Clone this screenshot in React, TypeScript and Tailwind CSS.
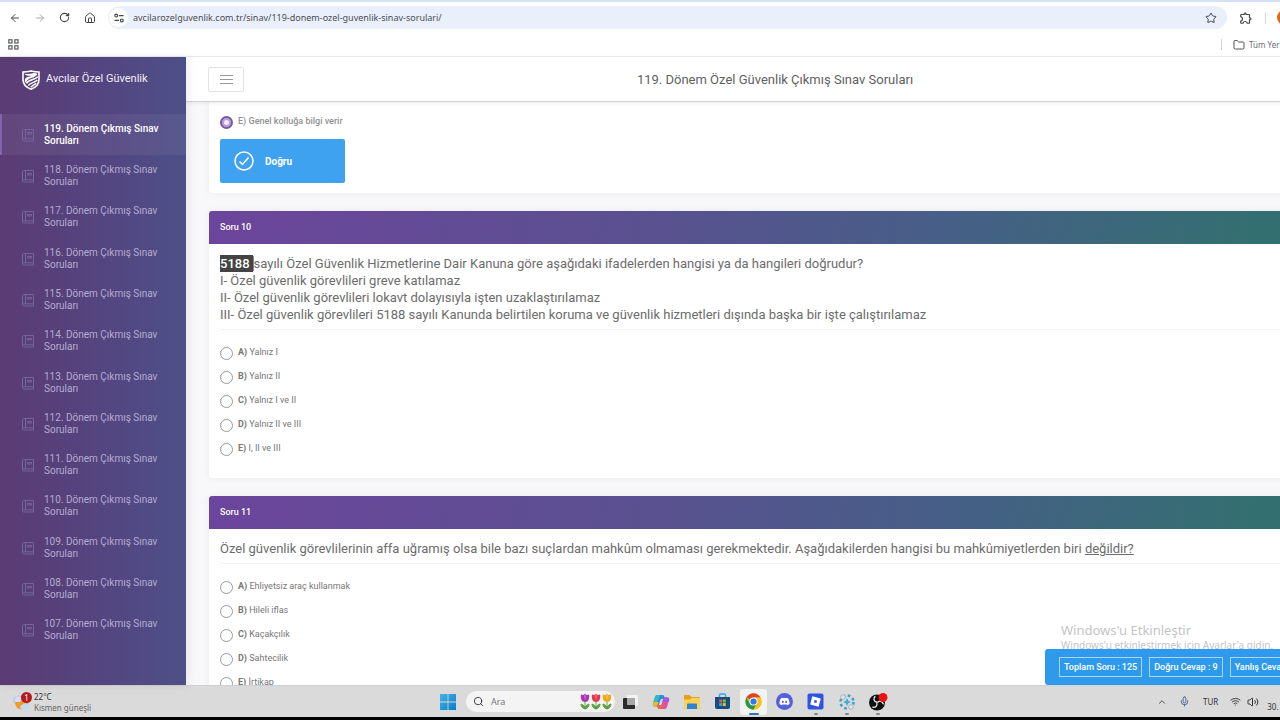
import { useState } from 'react'
import type { ReactNode } from 'react'
import { ArrowLeft, ArrowRight, ChevronUp, Folder, House, Mic, RotateCw, Search, Star, Volume2, Wifi } from 'lucide-react'
import { FaDiscord } from 'react-icons/fa'
import { MdOutlineExtension } from 'react-icons/md'

type Choice = { key: string; text: string }

const TERMS = [119, 118, 117, 116, 115, 114, 113, 112, 111, 110, 109, 108, 107]

const Q9: Choice[] = [{ key: 'E', text: 'Genel kolluğa bilgi verir' }]

const Q10: Choice[] = [
  { key: 'A', text: 'Yalnız I' },
  { key: 'B', text: 'Yalnız II' },
  { key: 'C', text: 'Yalnız I ve II' },
  { key: 'D', text: 'Yalnız II ve III' },
  { key: 'E', text: 'I, II ve III' },
]

const Q11: Choice[] = [
  { key: 'A', text: 'Ehliyetsiz araç kullanmak' },
  { key: 'B', text: 'Hileli iflas' },
  { key: 'C', text: 'Kaçakçılık' },
  { key: 'D', text: 'Sahtecilik' },
  { key: 'E', text: 'İrtikap' },
]

function TuneIcon() {
  return (
    <svg width="10" height="10" viewBox="0 0 10 10" fill="none" stroke="#444746" strokeWidth="1.2">
      <circle cx="2.2" cy="2.6" r="1.4" />
      <path d="M5 2.6h4.5M0.5 7.4H5" />
      <circle cx="7.8" cy="7.4" r="1.4" />
    </svg>
  )
}

function AppsIcon() {
  return (
    <svg width="11" height="11" viewBox="0 0 11 11" fill="none" stroke="#5a5c5e" strokeWidth="1.2">
      <rect x="0.8" y="0.8" width="3.2" height="3.2" />
      <rect x="6.8" y="0.8" width="3.2" height="3.2" />
      <rect x="0.8" y="6.8" width="3.2" height="3.2" />
      <rect x="6.8" y="6.8" width="3.2" height="3.2" />
    </svg>
  )
}

function ShieldLogo() {
  return (
    <svg width="18" height="20" viewBox="0 0 18 20" fill="none">
      <path
        d="M1 2C4 2 6.500 1.600 9 .9c2.500.7 5 1.100 8 1.100v7.500c0 5-3.500 8-8 9.700C4.500 17.500 1 14.500 1 9.500z"
        stroke="#fff"
        strokeWidth="1.600"
      />
      <path
        d="M2 3.500c3 1.200 6 .2 9-.3 2-.3 3.500 0 4.500.8-1 2-3 3-5.500 3.800-2 .6-4.500 1.200-5.500 3.700L3.700 13C2.300 10.500 2.500 8.500 4.500 7.500 6 6.700 8 6.700 9.500 5.500 7 6.100 4 6.200 2 3.500z"
        fill="#fff"
      />
      <path d="M4.500 13.300c2-3.800 7.500-3 11.300-6.500M6.300 15.700c2-3.200 6-2.700 9-5.700M8.800 17.300c1.500-2 3.500-2.200 5.200-4" stroke="#fff" strokeWidth="1.500" />
    </svg>
  )
}

function BookIcon() {
  return (
    <svg width="12" height="14" viewBox="0 0 12 14" fill="none" stroke="currentColor" strokeWidth="1">
      <path d="M11.500 10.800V1.500H2c-.9 0-1.500.4-1.500 1.200v9c0 .9.600 1.300 1.500 1.300h9.500v-2.200H2c-.8 0-1.500.4-1.500 1.100M3.500 1.500v9.300" />
      <path d="M5.500 4.500h4v1.500h-4z" />
    </svg>
  )
}

function NavButton({ label, children }: { label: string; children: ReactNode }) {
  return (
    <button aria-label={label} className="flex h-6 w-[25px] items-center justify-center text-[#444746]">
      {children}
    </button>
  )
}

function BrowserBar() {
  return (
    <header className="shrink-0 border-t-2 border-b border-t-[#d6e1f8] border-b-[#ececee] bg-white font-['Noto_Sans','Open_Sans',sans-serif]">
      <div className="flex h-[31px] items-center pl-[2px]">
        <NavButton label="Geri"><ArrowLeft size={12} /></NavButton>
        <NavButton label="İleri"><ArrowRight size={12} className="text-[#a5a7a9]" /></NavButton>
        <NavButton label="Yenile"><RotateCw size={11} strokeWidth={2.5} /></NavButton>
        <NavButton label="Ana sayfa"><House size={12} /></NavButton>
        <div className="ml-[6px] flex h-[23px] flex-1 items-center rounded-full bg-[#e9f0fb] px-px">
          <span className="flex size-[19px] items-center justify-center rounded-full bg-white"><TuneIcon /></span>
          <input
            aria-label="Adres çubuğu"
            defaultValue="avcilarozelguvenlik.com.tr/sinav/119-donem-ozel-guvenlik-sinav-sorulari/"
            className="ml-[5px] min-w-0 flex-1 bg-transparent text-[9px] text-[#4a4d52] outline-none"
          />
          <button aria-label="Yer işareti ekle" className="mr-[9px] text-[#444746]"><Star size={12} /></button>
        </div>
        <div className="flex w-[137px] shrink-0 items-center pl-3">
          <button aria-label="Uzantılar" className="text-[#444746]"><MdOutlineExtension size={14} /></button>
          <span className="ml-3 h-3 w-px bg-[#d3d6da]" />
          <span className="ml-[11px] size-[15px] rounded-full bg-[#e0661c]" />
        </div>
      </div>
      <div className="flex h-[23px] items-center pl-2">
        <button aria-label="Uygulamalar"><AppsIcon /></button>
        <div className="ml-auto flex w-[143px] items-center">
          <span className="h-[11px] w-px bg-[#cfd2d6]" />
          <button className="ml-[11px] flex items-center gap-1 text-[8px] text-[#6a6d70]">
            <Folder size={12} className="text-[#555]" />
            Tüm Yer
          </button>
        </div>
      </div>
    </header>
  )
}

function Sidebar() {
  return (
    <aside className="z-20 flex w-[186px] shrink-0 flex-col bg-linear-to-r from-[#5b3b73] via-[#54447f] to-[#4e4f88] shadow-[2px_0_10px_rgba(0,0,0,0.08)]">
      <a href="#" className="flex h-[45px] items-center gap-[6px] pl-[22px] text-[11px] text-[#f1edf7]">
        <ShieldLogo />
        Avcılar Özel Güvenlik
      </a>
      <nav className="mt-3 mb-[34px] flex flex-1 flex-col">
        {TERMS.map((term, i) => (
          <a
            key={term}
            href={`#donem-${term}`}
            className={
              i === 0
                ? 'flex flex-1 items-center border-l-2 border-[#8262b5] bg-white/6 pl-[20px] text-[10px] leading-3 font-medium text-white'
                : 'flex flex-1 items-center border-l-2 border-transparent pl-[20px] text-[10px] leading-3 text-[#b5abd0]'
            }
          >
            <span className="mr-[10px] text-[#75659c]"><BookIcon /></span>
            <span>
              {term}. Dönem Çıkmış Sınav
              <br />
              Soruları
            </span>
          </a>
        ))}
      </nav>
    </aside>
  )
}

function Options({ name, choices, answer }: { name: string; choices: Choice[]; answer?: string }) {
  const [picked, setPicked] = useState(answer)

  return (
    <div>
      {choices.map(c => (
        <label key={c.key} className={`flex h-6 items-center gap-[5px] text-[9px] ${answer ? 'text-[#919191]' : 'text-[#777]'}`}>
          <input
            type="radio"
            name={name}
            checked={picked === c.key}
            onChange={() => setPicked(c.key)}
            className="size-[13px] appearance-none rounded-full border border-[#999] bg-white checked:border-2 checked:border-[#75589f] checked:bg-[#f1e9fb] checked:shadow-[inset_0_0_0_2px_#b79bdc]"
          />
          <span className={answer ? 'font-medium' : ''}>
            <b className={answer ? 'font-medium' : 'font-bold'}>{c.key})</b> {c.text}
          </span>
        </label>
      ))}
    </div>
  )
}

function QuestionCard({ no, choices, children }: { no: number; choices: Choice[]; children: ReactNode }) {
  return (
    <section className="rounded-[3px] bg-white shadow-[0_0_8px_rgba(0,0,0,0.06)]">
      <h2 className="flex h-[33px] items-center rounded-t-[3px] bg-[linear-gradient(100deg,#6c459c_0%,#5a5090_38%,#465f87_65%,#336f70_92%)] px-[11px] text-[9px] font-medium text-white">
        Soru {no}
      </h2>
      <div className="px-[11px] pt-[11px] pb-[17px]">
        <div className="border-b border-[#f2f2f2] pb-[6px] text-[13px] leading-[17px] text-[#6c6c6c]">{children}</div>
        <div className="pt-[11px]">
          <Options name={`soru-${no}`} choices={choices} />
        </div>
      </div>
    </section>
  )
}

function ScoreBar() {
  return (
    <div className="absolute right-0 bottom-0 flex h-9 w-[319px] items-center gap-[7px] rounded-l-[3px] bg-[#2e9aec] pl-[14px] text-[9px] font-medium whitespace-nowrap text-white">
      <span className="border border-[#a9d6fa] px-1 py-px leading-4">Toplam Soru : 125</span>
      <span className="border border-[#a9d6fa] px-1 py-px leading-4">Doğru Cevap : 9</span>
      <span className="border border-[#a9d6fa] px-1 py-px leading-4">Yanlış Cevap</span>
    </div>
  )
}

function WeatherIcon() {
  return (
    <svg width="20" height="20" viewBox="0 0 20 20">
      <path d="M3 12a3.500 3.500 0 0 1 0-7 5 5 0 0 1 8 0v6z" fill="#b9cdec" />
      <circle cx="8.500" cy="11" r="6.500" fill="#f09a2a" />
      <path d="M2 8a4 4 0 0 1 7-2l-2 4H2z" fill="#d3e0f5" />
      <path d="M9 17.500a2.300 2.300 0 0 1 0-4.500 3.500 3.500 0 0 1 6 0 2.300 2.300 0 0 1 0 4.500z" fill="#c5d9f7" />
      <circle cx="13.500" cy="5.500" r="5.500" fill="#b3191f" />
      <text x="13.500" y="8.500" fontSize="8" textAnchor="middle" fill="#fff" fontFamily="Noto Sans, sans-serif">1</text>
    </svg>
  )
}

function WindowsIcon() {
  return (
    <svg width="16" height="16" viewBox="0 0 16 16">
      <defs>
        <linearGradient id="win" x1="0" y1="0" x2="1" y2="1">
          <stop offset="0" stopColor="#45b5e8" />
          <stop offset="1" stopColor="#0b7bc9" />
        </linearGradient>
      </defs>
      <path d="M0 0h7.600v7.600H0zM8.400 0H16v7.600H8.400zM0 8.400h7.600V16H0zM8.400 8.400H16V16H8.400z" fill="url(#win)" />
    </svg>
  )
}

function Tulips() {
  const flowers = [
    { x: 0, color: '#b035b5' },
    { x: 11, color: '#e23a50' },
    { x: 22, color: '#efa91f' },
  ]
  return (
    <svg width="32" height="17" viewBox="0 0 32 17">
      {flowers.map(f => (
        <g key={f.x} transform={`translate(${f.x} 0)`}>
          <path d="M5 7v9M5 16C2 15.500 1 13 1 11c2.500.5 4 2.500 4 5zm0 0c3-.5 4-3 4-5-2.500.5-4 2.500-4 5z" fill="#62a83e" stroke="#4e9436" strokeWidth="0.800" />
          <path d="M1 1.500l2.500.5L5 .5 6.500 2 9 1.500c.7 4-.5 7.500-4 7.500S.3 5.500 1 1.500z" fill={f.color} />
          <path d="M5 .5c1.300 2 1.300 4 0 6-1.300-2-1.300-4 0-6z" fill="#fff" opacity="0.250" />
        </g>
      ))}
    </svg>
  )
}

function TaskViewIcon() {
  return (
    <svg width="16" height="16" viewBox="0 0 16 16">
      <rect x="5" y="1" width="11" height="11" rx="1" fill="#f3f3f3" />
      <rect x="1" y="4" width="12" height="11" rx="1" fill="#2b2b2b" />
      <path d="M5 4h8v7H5z" fill="#a8a8a8" />
    </svg>
  )
}

function CopilotIcon() {
  return (
    <svg width="18" height="16" viewBox="0 0 18 16">
      <path d="M5.500 1h5c1.300 0 1.700.8 2 2l.6 2H10c-1 0-1.500.5-1.800 1.500L6.800 11c-.3 1-.9 1.500-1.800 1.500H2.500C.9 12.500.5 11 1 9.500l2-6.500c.4-1.300 1.100-2 2.500-2z" fill="#2a8fe0" />
      <path d="M2 6l1-3c.4-1.300 1.100-2 2.500-2H8L5 9H1.200z" fill="#35b9c5" />
      <path d="M1 9.500L1.500 8H6.500L5.800 10.500c-.3 1.200-.9 2-1.800 2H2.500C1 12.500.6 11 1 9.500z" fill="#f2b827" />
      <path d="M12.500 15h-5c-1.300 0-1.700-.8-2-2l-.6-2H8c1 0 1.500-.5 1.800-1.500L11.200 5c.3-1 .9-1.500 1.800-1.500h2.500c1.600 0 2 1.500 1.500 3l-2 6.500c-.4 1.300-1.100 2-2.500 2z" fill="#e0559a" />
      <path d="M11.200 5c.3-1 .9-1.500 1.800-1.500h2.500c1.600 0 2 1.500 1.500 3L16.500 8h-6.200z" fill="#a259e0" />
      <path d="M7.500 15c-1.300 0-1.700-.8-2-2l-.6-2H8l3 1-1 3z" fill="#f06a3e" />
    </svg>
  )
}

function ExplorerIcon() {
  return (
    <svg width="18" height="16" viewBox="0 0 18 16">
      <path d="M1 2c0-.6.400-1 1-1h4.500L8.500 3H16c.6 0 1 .4 1 1v10c0 .6-.4 1-1 1H2c-.6 0-1-.4-1-1z" fill="#e0a21c" />
      <path d="M1 5.500h6l1.500-1.500H17v10c0 .6-.4 1-1 1H2c-.6 0-1-.4-1-1z" fill="#fad255" />
      <path d="M4 10.500c0-.6.400-1 1-1h8c.6 0 1 .4 1 1V15H4z" fill="#2d86d4" />
    </svg>
  )
}

function StoreIcon() {
  return (
    <svg width="17" height="17" viewBox="0 0 17 17">
      <path d="M5.500 4.500V2c0-.6.400-1 1-1h4c.6 0 1 .4 1 1v2.500" fill="none" stroke="#39a5e4" strokeWidth="1.400" />
      <path d="M1 4h15v10c0 1.200-.8 2-2 2H3c-1.200 0-2-.8-2-2z" fill="#174d80" />
      <path d="M5.200 6.500h3v3h-3z" fill="#ef5b34" />
      <path d="M8.800 6.500h3v3h-3z" fill="#7dba2f" />
      <path d="M5.200 10.100h3v3h-3z" fill="#31a5ea" />
      <path d="M8.800 10.100h3v3h-3z" fill="#fbb91f" />
    </svg>
  )
}

function ChromeIcon() {
  return (
    <svg width="17" height="17" viewBox="0 0 48 48">
      <circle cx="24" cy="24" r="23" fill="#fbc116" />
      <path d="M24 24L4.100 12.500A23 23 0 0 1 43.900 12.500H24z" fill="#e0412f" />
      <path d="M4.100 12.500A23 23 0 0 0 24 47l10-17.300L24 24 14 29.700z" fill="#27994a" />
      <path d="M43.900 12.500H24v11.500l10 5.700L24 47A23 23 0 0 0 43.900 12.500z" fill="#fbc116" />
      <circle cx="24" cy="24" r="11.500" fill="#fff" />
      <circle cx="24" cy="24" r="8.800" fill="#2f79e8" />
    </svg>
  )
}

function RobloxIcon() {
  return (
    <svg width="17" height="17" viewBox="0 0 17 17">
      <rect x="0.500" y="0.500" width="16" height="16" rx="2" fill="#3153e3" />
      <path d="M5.300 3.200l8.500 2.200-2.200 8.400-8.400-2.200zM7.500 7l-.6 2.400 2.500.7.600-2.500z" fill="#fff" fillRule="evenodd" />
    </svg>
  )
}

function GearIcon() {
  return (
    <svg width="18" height="18" viewBox="0 0 18 18" fill="none">
      <circle cx="9" cy="9" r="6.500" stroke="#3a9fc9" strokeWidth="2.500" strokeDasharray="2.600 2.500" />
      <path d="M9 5l1.300 2.700L13 9l-2.700 1.300L9 13l-1.300-2.700L5 9l2.700-1.300z" fill="#45aad4" />
      <circle cx="5" cy="4" r="2.300" fill="#dfe8ec" stroke="#8ea5b0" strokeWidth="0.700" />
      <circle cx="13" cy="14" r="2.300" fill="#dfe8ec" stroke="#8ea5b0" strokeWidth="0.700" />
    </svg>
  )
}

function ObsIcon() {
  return (
    <svg width="20" height="18" viewBox="0 0 20 18">
      <circle cx="9" cy="9.500" r="8" fill="#101010" />
      <g fill="none" stroke="#e8e8e8" strokeWidth="1.300" strokeLinecap="round">
        <path d="M7 3.500c-1.800 2-1.300 4.800 1.500 5.500" />
        <path d="M7 3.500c-1.800 2-1.300 4.800 1.500 5.500" transform="rotate(120 9 9.500)" />
        <path d="M7 3.500c-1.800 2-1.300 4.800 1.500 5.500" transform="rotate(240 9 9.500)" />
      </g>
      <circle cx="15" cy="4.500" r="4.500" fill="#ec1313" />
    </svg>
  )
}

const APPS: { name: string; icon: ReactNode; state?: 'active' | 'open' }[] = [
  { name: 'Görev görünümü', icon: <TaskViewIcon /> },
  { name: 'Copilot', icon: <CopilotIcon /> },
  { name: 'Dosya Gezgini', icon: <ExplorerIcon /> },
  { name: 'Microsoft Store', icon: <StoreIcon /> },
  { name: 'Chrome', icon: <ChromeIcon />, state: 'active' },
  {
    name: 'Discord',
    icon: <span className="flex size-[17px] items-center justify-center rounded-full bg-[#5560dc]"><FaDiscord size={11} color="#fff" /></span>,
  },
  { name: 'Roblox', icon: <RobloxIcon />, state: 'open' },
  { name: 'Araçlar', icon: <GearIcon />, state: 'open' },
  { name: 'OBS Studio', icon: <ObsIcon />, state: 'open' },
]

function Taskbar() {
  return (
    <footer className="flex h-8 shrink-0 items-center border-t border-[#cfcfcf] bg-[#dadada] font-['Noto_Sans','Open_Sans',sans-serif]">
      <button className="flex w-[435px] shrink-0 items-center gap-px pl-[13px] text-left text-[8px] leading-[11px] text-[#666]">
        <WeatherIcon />
        <span>
          <span className="block text-[#333]">22°C</span>
          Kısmen güneşli
        </span>
      </button>
      <button aria-label="Başlat" className="flex w-[26px] justify-center"><WindowsIcon /></button>
      <label className="ml-[5px] flex h-[21px] w-[149px] items-center rounded-full bg-[#f4f4f4] pr-[3px] pl-[7px]">
        <Search size={11} className="text-[#333]" />
        <input placeholder="Ara" aria-label="Ara" className="ml-[7px] min-w-0 flex-1 bg-transparent text-[9px] outline-none placeholder:text-[#777]" />
        <Tulips />
      </label>
      <div className="-ml-px flex">
        {APPS.map(app => (
          <button key={app.name} aria-label={app.name} className="w-[31px] px-[2px]">
            <span
              className={
                app.state === 'active'
                  ? 'relative flex h-[26px] items-center justify-center rounded-[3px] bg-[#f2f2f2]'
                  : 'relative flex h-[26px] items-center justify-center'
              }
            >
              {app.icon}
              {app.state === 'active' && <span className="absolute bottom-0 h-[2px] w-[10px] rounded-full bg-[#2f74b5]" />}
              {app.state === 'open' && <span className="absolute bottom-0 h-[2px] w-1 rounded-full bg-[#858585]" />}
            </span>
          </button>
        ))}
      </div>
      <div className="ml-auto flex w-[207px] shrink-0 items-center text-[#333]">
        <button aria-label="Gizli simgeler"><ChevronUp size={10} /></button>
        <Mic size={11} className="ml-[12px] text-[#42608f]" />
        <span className="ml-[13px] text-[8px]">TUR</span>
        <Wifi size={11} className="ml-[12px]" />
        <Volume2 size={12} className="ml-[6px]" />
        <span className="ml-2 pt-[11px] text-[8px] leading-3">30.</span>
      </div>
    </footer>
  )
}

export default function App() {
  return (
    <div className="h-screen overflow-hidden bg-black font-[Roboto,'Liberation_Sans',sans-serif]">
      {/* the desktop runs a little past the right edge of the window */}
      <div className="flex h-full w-[calc(100%+84px)] flex-col pb-[3px]">
        <BrowserBar />
        <div className="flex min-h-0 flex-1 bg-[#f8f8fb]">
          <Sidebar />
          <div className="relative flex min-w-0 flex-1 flex-col">
            <div className="z-10 flex h-[45px] shrink-0 items-center border-b border-[#d2d2d4] bg-white pl-[22px] shadow-[0_1px_4px_rgba(0,0,0,0.08)]">
              <button aria-label="Menü" className="flex h-[25px] w-9 items-center justify-center rounded-[2px] border border-[#e2e2e2] text-[#999]">
                <svg width="13" height="9" viewBox="0 0 13 9" stroke="currentColor" strokeWidth="1">
                  <path d="M0 .5h13M0 4.500h13M0 8.500h13" />
                </svg>
              </button>
              <h1 className="flex-1 pt-px pr-[58px] text-center text-[13px] text-[#5f5f5f]">119. Dönem Özel Güvenlik Çıkmış Sınav Soruları</h1>
            </div>
            <main className="flex min-h-0 flex-1 flex-col gap-[18px] overflow-hidden px-[23px]">
              <section className="shrink-0 rounded-b-[3px] bg-white px-[11px] pt-[8px] pb-[10px] shadow-[0_0_8px_rgba(0,0,0,0.06)]">
                <Options name="soru-9" choices={Q9} answer="E" />
                <div className="mt-[5px] flex h-11 w-[125px] items-center gap-[11px] rounded-[2px] bg-[#3fa2f0] pl-[14px] text-[10px] font-bold text-white">
                  <svg width="20" height="20" viewBox="0 0 20 20" fill="none" stroke="currentColor" strokeWidth="1.500">
                    <circle cx="10" cy="10" r="9" />
                    <path d="M5.500 10.500l3 3 6-7" />
                  </svg>
                  Doğru
                </div>
              </section>
              <QuestionCard no={10} choices={Q10}>
                <p>
                  <mark className="inline-block bg-[#444] pr-[3px] font-medium text-white">5188</mark>
                  <span className="border-l border-[#888]">sayılı</span> Özel Güvenlik Hizmetlerine Dair Kanuna göre aşağıdaki ifadelerden hangisi ya da hangileri doğrudur?
                </p>
                <p>I- Özel güvenlik görevlileri greve katılamaz</p>
                <p>II- Özel güvenlik görevlileri lokavt dolayısıyla işten uzaklaştırılamaz</p>
                <p>III- Özel güvenlik görevlileri 5188 sayılı Kanunda belirtilen koruma ve güvenlik hizmetleri dışında başka bir işte çalıştırılamaz</p>
              </QuestionCard>
              <QuestionCard no={11} choices={Q11}>
                <p>
                  Özel güvenlik görevlilerinin affa uğramış olsa bile bazı suçlardan mahkûm olmaması gerekmektedir. Aşağıdakilerden hangisi bu mahkûmiyetlerden biri <u>değildir?</u>
                </p>
              </QuestionCard>
            </main>
            <div className="absolute right-0 bottom-[33px] w-[303px] font-['Noto_Sans','Open_Sans',sans-serif] text-[#c4c4c4]">
              <p className="text-[13px] leading-4">Windows'u Etkinleştir</p>
              <p className="text-[10px] leading-[14px]">Windows'u etkinleştirmek için Ayarlar'a gidin.</p>
            </div>
            <ScoreBar />
          </div>
        </div>
        <Taskbar />
      </div>
    </div>
  )
}
